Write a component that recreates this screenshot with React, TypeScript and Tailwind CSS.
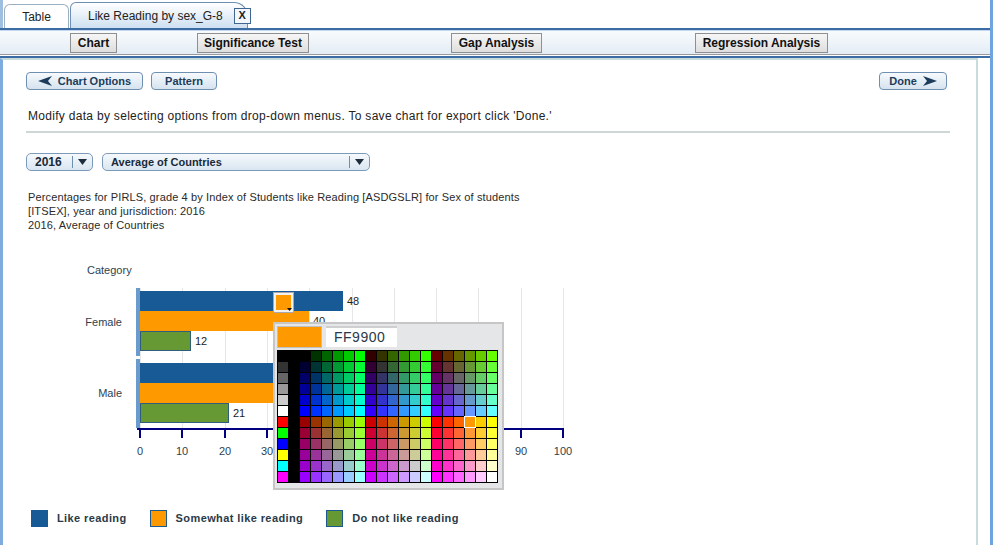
import React from 'react';

const S = 4.23;
const HEX = ['00', '33', '66', '99', 'CC', 'FF'];
const GRAYS = ['000000', '333333', '666666', '999999', 'CCCCCC', 'FFFFFF', 'FF0000', '00FF00', '0000FF', 'FFFF00', '00FFFF', 'FF00FF'];

function paletteRows(): string[][] {
  const rows: string[][] = [];
  for (let r = 0; r < 12; r++) {
    const row: string[] = [GRAYS[r], '000000'];
    for (let b = 0; b < 3; b++) {
      const red = HEX[b + (r >= 6 ? 3 : 0)];
      const blue = HEX[r % 6];
      for (let g = 0; g < 6; g++) row.push(red + HEX[g] + blue);
    }
    rows.push(row);
  }
  return rows;
}

const groups = [
  { label: 'Female', vals: [48, 40, 12], pt: 'pt-[3px]' },
  { label: 'Male', vals: [37, 42, 21], pt: 'pt-[4px]' },
];

function Bar({ v, kind }: { v: number; kind: number }) {
  const cls =
    kind === 0
      ? 'bg-[#175a96]'
      : kind === 1
      ? 'bg-[#ff9900]'
      : 'bg-[#669933] border border-[#2f5d7c]';
  return (
    <div className="flex items-center h-[20px]">
      <div className={`h-[20px] ${cls}`} style={{ width: Math.round(v * S) }} />
      <span className="ml-[4px] text-[11px] text-[#222]">{v}</span>
    </div>
  );
}

function Tri({ dir }: { dir: 'l' | 'r' | 'd' }) {
  if (dir === 'd')
    return (
      <svg width="9" height="6" viewBox="0 0 9 6">
        <path d="M0 0 L9 0 L4.5 6 Z" fill="#1d2d3d" />
      </svg>
    );
  return (
    <svg width="14" height="10" viewBox="0 0 14 10">
      {dir === 'l' ? <path d="M0 5 L14 0 L10 5 L14 10 Z" fill="#1d3c5c" /> : <path d="M14 5 L0 0 L4 5 L0 10 Z" fill="#1d3c5c" />}
    </svg>
  );
}

export default function App() {
  const rows = paletteRows();
  const ticks = [0, 10, 20, 30, 40, 50, 60, 70, 80, 90, 100];
  return (
    <div className="w-[1003px] h-[545px] bg-white relative overflow-hidden flex font-['Liberation_Sans',Arial,sans-serif] text-[#222]">
      <div className="w-[990px] flex flex-col">
        {/* Tabs */}
        <div className="h-[28px] flex items-end pl-[1px] border-l-[3px] border-[#9fbfe0]">
          <div className="w-[65px] h-[24px] border border-b-0 border-[#9db0c0] rounded-t-[6px] bg-white flex items-center justify-center text-[12px] text-[#222]">
            Table
          </div>
          <div className="ml-[1px] w-[178px] h-[26px] border border-b-0 border-[#6d8fb5] rounded-tl-[6px] rounded-tr-[14px] bg-gradient-to-b from-white to-[#cfe0f1] flex items-center pl-[17px] text-[12px] text-[#222] whitespace-nowrap">
            <span>Like Reading by sex_G-8</span>
            <span className="ml-[11px] shrink-0 w-[17px] h-[16px] border border-[#3f6590] bg-[#f3f6fa] flex items-center justify-center text-[11px] font-bold leading-none">X</span>
          </div>
        </div>
        {/* Toolbar */}
        <div className="h-[30px] flex flex-col">
          <div className="h-[2px] bg-[#3b6ca4]" />
          <div className="h-[1px] bg-[#c4d7ec]" />
          <div className="h-[23px] bg-gradient-to-b from-[#f8fbfd] to-[#e3ecf5] flex items-center text-[12px] font-bold text-[#111]">
            <div className="ml-[70px] w-[47px] h-[20px] border border-[#8f8f8f] bg-gradient-to-b from-[#f6f6f6] to-[#dedede] flex items-center justify-center">Chart</div>
            <div className="ml-[80px] w-[112px] h-[20px] border border-[#8f8f8f] bg-gradient-to-b from-[#f6f6f6] to-[#dedede] flex items-center justify-center">Significance Test</div>
            <div className="ml-[142px] w-[91px] h-[20px] border border-[#8f8f8f] bg-gradient-to-b from-[#f6f6f6] to-[#dedede] flex items-center justify-center">Gap Analysis</div>
            <div className="ml-[153px] w-[133px] h-[20px] border border-[#8f8f8f] bg-gradient-to-b from-[#f6f6f6] to-[#dedede] flex items-center justify-center">Regression Analysis</div>
          </div>
          <div className="h-[1px] bg-[#9a9a9a]" />
          <div className="h-[1px] bg-white" />
          <div className="h-[2px] bg-[#3b6ca4]" />
        </div>
        {/* Content panel */}
        <div className="flex-1 w-[978px] border-l-[3px] border-l-[#7eacdf] border-t-2 border-t-[#c9dcdc] border-r-2 border-r-[#c9dcdc] pl-[23px] pr-[26px] pt-[12px] flex flex-col">
          <div className="flex items-center justify-between">
            <div className="flex gap-[8px]">
              <div className="w-[117px] h-[18px] border border-[#6f8fb0] rounded-[4px] bg-gradient-to-b from-[#f7fafd] to-[#d5e3ef] flex items-center justify-center gap-[6px] text-[11px] font-bold text-[#1d3c5c]">
                <Tri dir="l" />
                <span>Chart Options</span>
              </div>
              <div className="w-[66px] h-[18px] border border-[#6f8fb0] rounded-[4px] bg-gradient-to-b from-[#f7fafd] to-[#d5e3ef] flex items-center justify-center text-[11px] font-bold text-[#1d3c5c]">
                Pattern
              </div>
            </div>
            <div className="mr-[3px] w-[68px] h-[18px] border border-[#6f8fb0] rounded-[4px] bg-gradient-to-b from-[#f7fafd] to-[#d5e3ef] flex items-center justify-center gap-[6px] text-[11px] font-bold text-[#1d3c5c]">
              <span>Done</span>
              <Tri dir="r" />
            </div>
          </div>
          <div className="mt-[19px] ml-[2px] text-[12px] leading-[14px] tracking-[0.3px] text-[#222]">
            Modify data by selecting options from drop-down menus. To save chart for export click 'Done.'
          </div>
          <div className="mt-[8px] h-[2px] bg-[#cfd6d6]" />
          <div className="mt-[20px] flex gap-[9px]">
            <div className="w-[67px] h-[18px] border border-[#7c9bbb] rounded-[5px] bg-gradient-to-b from-[#f6f9fc] to-[#d9e6f1] flex items-center text-[12px] font-bold text-[#1a2a3a]">
              <span className="pl-[8px] w-[45px]">2016</span>
              <span className="w-[1px] h-[12px] bg-[#6f8fb0]" />
              <span className="flex-1 flex justify-center"><Tri dir="d" /></span>
            </div>
            <div className="w-[268px] h-[18px] border border-[#7c9bbb] rounded-[5px] bg-gradient-to-b from-[#f6f9fc] to-[#d9e6f1] flex items-center text-[11px] font-bold text-[#1a2a3a]">
              <span className="pl-[8px] w-[246px]">Average of Countries</span>
              <span className="w-[1px] h-[12px] bg-[#6f8fb0]" />
              <span className="flex-1 flex justify-center"><Tri dir="d" /></span>
            </div>
          </div>
          <div className="mt-[19px] ml-[2px] text-[11px] leading-[14px] tracking-[0.13px] text-[#2a2a2a]">
            <div>Percentages for PIRLS, grade 4 by Index of Students like Reading [ASDGSLR] for Sex of students</div>
            <div>[ITSEX], year and jurisdiction: 2016</div>
            <div>2016, Average of Countries</div>
          </div>
          <div className="mt-[31px] ml-[61px] text-[11px] leading-[14px] text-[#2e3f4f]">Category</div>
          {/* Chart */}
          <div className="mt-[11px] flex">
            <div className="w-[110px] flex flex-col">
              {groups.map((g, i) => (
                <div key={g.label} className={`${i ? 'h-[69px] mt-[3px]' : 'h-[68px]'} flex items-center justify-end pr-[14px] text-[11px] text-[#2e3f4f]`}>
                  {g.label}
                </div>
              ))}
            </div>
            <div className="flex flex-col">
              <div className="relative flex flex-col">
                <div className="absolute left-[4px] top-0 bottom-0 w-[424px]">
                  {ticks.map((t) => (
                    <div key={t} className="absolute top-0 bottom-0 w-[1px] bg-[#e6e6e6]" style={{ left: Math.round(t * S) }} />
                  ))}
                </div>
                {groups.map((g, i) => (
                  <div key={g.label} className={`relative flex ${i ? 'mt-[3px] h-[69px]' : 'h-[68px]'}`}>
                    <div className="w-[4px] bg-[#6a9bcc]" />
                    <div className={`flex flex-col ${g.pt}`}>
                      {g.vals.map((v, k) => (
                        <Bar key={k} v={v} kind={k} />
                      ))}
                    </div>
                  </div>
                ))}
              </div>
              <div className="ml-[1px] w-[427px] h-[2px] bg-[#000080]" />
              <div className="relative ml-[4px] h-[28px]">
                {ticks.map((t) => (
                  <div key={t} className="absolute top-0 flex flex-col items-center w-[30px]" style={{ left: Math.round(t * S) - 15 }}>
                    <div className="w-[2px] h-[8px] bg-[#000080]" />
                    <div className="mt-[7px] text-[11px] leading-[12px] text-[#2e3f4f]">{t}</div>
                  </div>
                ))}
              </div>
            </div>
          </div>
          {/* Legend */}
          <div className="mt-[52px] ml-[5px] flex items-center gap-[23px] text-[11px] font-bold tracking-[0.4px] text-[#2a3a48]">
            <div className="flex items-center gap-[9px]">
              <div className="w-[17px] h-[17px] bg-[#175a96] border border-[#175a96]" />
              <span>Like reading</span>
            </div>
            <div className="flex items-center gap-[9px]">
              <div className="w-[17px] h-[17px] bg-[#ff9900] border border-[#1f5a8c]" />
              <span>Somewhat like reading</span>
            </div>
            <div className="flex items-center gap-[9px]">
              <div className="w-[17px] h-[17px] bg-[#669933] border border-[#1f5a8c]" />
              <span>Do not like reading</span>
            </div>
          </div>
        </div>
      </div>
      <div className="w-[3px] bg-[#6ea4e0]" />

      {/* Swatch button over the chart */}
      <div className="absolute left-[273px] top-[292px] w-[21px] h-[21px] border border-[#a9a9a9] bg-[#f2f2f2] p-[2px]">
        <div className="w-full h-full bg-[#ff9900]" />
        <svg className="absolute right-[1px] bottom-[1px]" width="5" height="3" viewBox="0 0 5 3">
          <path d="M0 0 L5 0 L2.5 3 Z" fill="#111" />
        </svg>
      </div>

      {/* Colour picker popup */}
      <div className="absolute left-[273px] top-[322px] w-[231px] h-[168px] border-2 border-[#c6c6c6] bg-[#e5e6e8] p-[2px]">
        <div className="flex h-[22px]">
          <div className="w-[45px] h-[22px] bg-[#ff9900] border border-[#c0c0c0]" />
          <div className="ml-[4px] w-[71px] h-[21px] bg-white border-t-2 border-[#cfcfcf] flex items-center pl-[8px] text-[14px] tracking-[0.5px] text-[#2a3a48]">
            FF9900
          </div>
        </div>
        <div className="mt-[2px] w-[221px] grid grid-cols-[repeat(20,10px)] gap-[1px] bg-black p-[1px]">
          {rows.map((row, r) =>
            row.map((c, k) => (
              <div
                key={`${r}-${k}`}
                className={`h-[10px] ${r === 6 && k === 17 ? 'outline outline-1 outline-white relative z-10' : ''}`}
                style={{ backgroundColor: `#${c}` }}
              />
            ))
          )}
        </div>
      </div>
    </div>
  );
}
